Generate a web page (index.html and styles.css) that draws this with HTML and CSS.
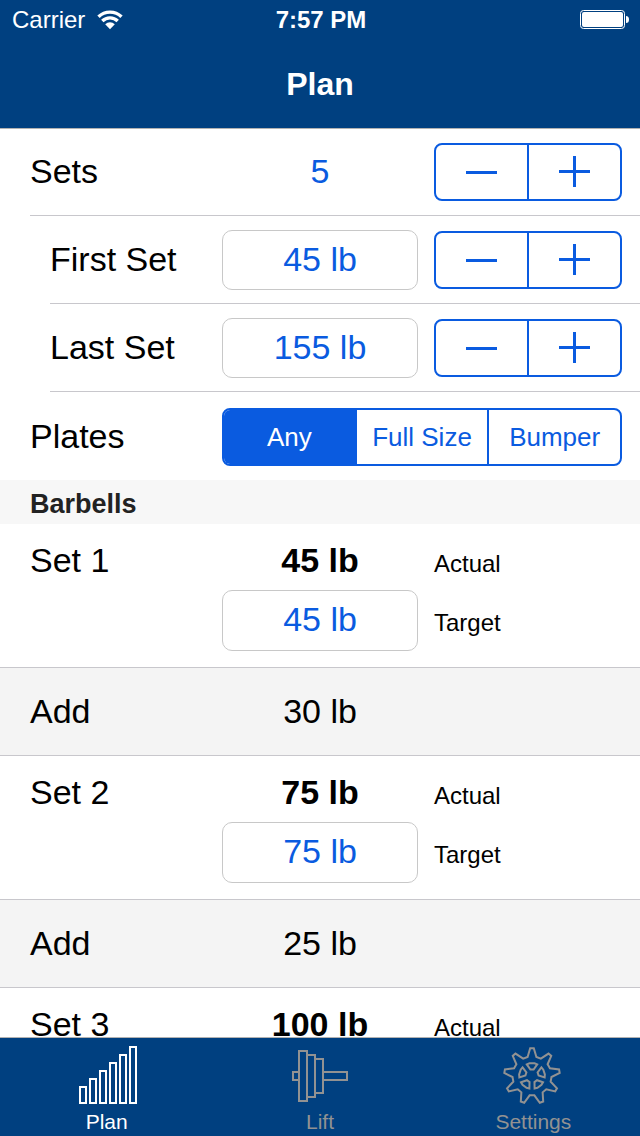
FILE: index.html
```html
<!DOCTYPE html>
<html lang="en">
<head>
    <meta charset="utf-8" />
    <meta name="viewport" content="width=device-width" />
    <title>Plan</title>
    <link rel="stylesheet" href="styles.css">
</head>
<body>
    <header class="top">
        <div class="status">
            <div class="carrier">
                <span>Carrier</span>
                <svg width="26" height="20" viewBox="0 0 26 20" aria-hidden="true">
                    <path d="M1.500 6.800a16.500 16.500 0 0 1 23 0M5.300 11a11 11 0 0 1 15.400 0" fill="none" stroke="#fff" stroke-width="3.400" />
                    <path d="M8.200 14.200a7 7 0 0 1 9.600 0L13 19.200z" fill="#fff" />
                </svg>
            </div>
            <div class="clock">7:57 PM</div>
            <svg class="battery" width="50" height="20" viewBox="0 0 50 20" aria-hidden="true">
                <rect x="0.5" y="0.5" width="44" height="18" rx="3" fill="none" stroke="#fff" />
                <rect x="2" y="2" width="41" height="15" rx="2" fill="#fff" />
                <path d="M46 6q3 0 3 3.500t-3 3.500z" fill="#fff" />
            </svg>
        </div>
        <h1>Plan</h1>
    </header>

    <main>
        <section class="options">
            <div class="row">
                <span class="name">Sets</span>
                <output class="value blue">5</output>
                <div class="stepper">
                    <button type="button" aria-label="Fewer sets"><svg width="32" height="32"><path d="M0 16.500h31" /></svg></button>
                    <button type="button" aria-label="More sets"><svg width="32" height="32"><path d="M0 15.500h31M15.500 0v31" /></svg></button>
                </div>
            </div>
            <div class="row sub">
                <label class="name" for="first">First Set</label>
                <input class="weight" id="first" type="text" value="45 lb" />
                <div class="stepper">
                    <button type="button" aria-label="Lower first set"><svg width="32" height="32"><path d="M0 16.500h31" /></svg></button>
                    <button type="button" aria-label="Raise first set"><svg width="32" height="32"><path d="M0 15.500h31M15.500 0v31" /></svg></button>
                </div>
            </div>
            <div class="row sub">
                <label class="name" for="last">Last Set</label>
                <input class="weight" id="last" type="text" value="155 lb" />
                <div class="stepper">
                    <button type="button" aria-label="Lower last set"><svg width="32" height="32"><path d="M0 16.500h31" /></svg></button>
                    <button type="button" aria-label="Raise last set"><svg width="32" height="32"><path d="M0 15.500h31M15.500 0v31" /></svg></button>
                </div>
            </div>
            <div class="row plates">
                <span class="name" id="plates">Plates</span>
                <div class="segmented" role="radiogroup" aria-labelledby="plates">
                    <label><input type="radio" name="plates" checked />Any</label>
                    <label><input type="radio" name="plates" />Full Size</label>
                    <label><input type="radio" name="plates" />Bumper</label>
                </div>
            </div>
        </section>

        <section>
            <h2>Barbells</h2>
            <div class="set">
                <span class="name">Set 1</span>
                <span class="value actual">45 lb</span>
                <span class="note">Actual</span>
                <input class="weight" id="target1" type="text" value="45 lb" />
                <label class="note" for="target1">Target</label>
            </div>
            <div class="row add">
                <span class="name">Add</span>
                <span class="value">30 lb</span>
            </div>
            <div class="set">
                <span class="name">Set 2</span>
                <span class="value actual">75 lb</span>
                <span class="note">Actual</span>
                <input class="weight" id="target2" type="text" value="75 lb" />
                <label class="note" for="target2">Target</label>
            </div>
            <div class="row add">
                <span class="name">Add</span>
                <span class="value">25 lb</span>
            </div>
            <div class="set">
                <span class="name">Set 3</span>
                <span class="value actual">100 lb</span>
                <span class="note">Actual</span>
            </div>
        </section>
    </main>

    <nav class="tabs">
        <a class="current" href="#plan">
            <svg width="60" height="60" viewBox="0 0 60 60" aria-hidden="true">
                <rect x="3" y="41" width="6" height="16" />
                <rect x="13" y="33" width="6" height="24" />
                <rect x="23" y="25" width="6" height="32" />
                <rect x="33" y="17" width="6" height="40" />
                <rect x="43" y="9" width="6" height="48" />
                <rect x="53" y="1" width="6" height="56" />
            </svg>
            <span>Plan</span>
        </a>
        <a href="#lift">
            <svg width="60" height="60" viewBox="0 0 60 60" aria-hidden="true">
                <rect x="3" y="26" width="6" height="8" />
                <rect x="9" y="5" width="8" height="50" />
                <rect x="17" y="9" width="8" height="42" />
                <rect x="25" y="13" width="8" height="34" />
                <rect x="33" y="26" width="24" height="8" />
            </svg>
            <span>Lift</span>
        </a>
        <a href="#settings">
            <svg width="60" height="60" viewBox="-29 -30 60 60" aria-hidden="true">
                <path d="M-4.400-19L-1.800-27.800H1.800L4.400-19L8.850-17.380L16.500-22.450L19.260-20.130L15.590-11.720L17.950-7.640L27.070-6.610L27.690-3.070L19.490 1.020L18.650 5.690L24.970 12.340L23.170 15.460L14.250 13.310L10.640 16.360L11.200 25.520L7.820 26.740L2.360 19.360H-2.360L-7.820 26.740L-11.200 25.520L-10.640 16.360L-14.250 13.310L-23.170 15.460L-24.970 12.340L-18.650 5.690L-19.490 1.020L-27.690-3.070L-27.070-6.610L-17.950-7.640L-15.590-11.720L-19.260-20.130L-16.500-22.450L-8.850-17.380Z" />
                <path id="hole" d="M-5.200-11.600L-2.500-12.700H2.500L5.200-11.600L1.600-6.400H-1.600Z" />
                <use href="#hole" transform="rotate(72)" />
                <use href="#hole" transform="rotate(144)" />
                <use href="#hole" transform="rotate(216)" />
                <use href="#hole" transform="rotate(288)" />
            </svg>
            <span>Settings</span>
        </a>
    </nav>
</body>
</html>
```
FILE: styles.css
```css
* {
    box-sizing: border-box;
}

body {
    margin: 0;
    height: 100vh;
    display: flex;
    flex-direction: column;
    background: #fff;
    color: #000;
    font: 34px/40px "Liberation Sans", Arial, sans-serif;
}

h1, h2 {
    margin: 0;
    font-weight: bold;
}

button, input {
    font: inherit;
    color: inherit;
}

/* status bar and title */
.top {
    position: relative;
    background: #004080;
    color: #fff;
    box-shadow: 0 1px 0 #b2b2b2;
}

.status {
    display: grid;
    grid-template-columns: 1fr auto 1fr;
    align-items: center;
    height: 40px;
    padding: 0 10px 0 12px;
    font-size: 24px;
}

.carrier {
    display: flex;
    align-items: center;
    gap: 12px;
}

.clock {
    font-weight: bold;
}

.battery {
    justify-self: end;
}

.top h1 {
    padding: 24px 0;
    font-size: 32px;
    text-align: center;
}

main {
    flex: 1;
    min-height: 0;
    overflow-y: auto;
    scrollbar-width: none;
}

/* table rows */
.row, .set {
    display: grid;
    grid-template-columns: 1fr 196px 1fr;
}

.row {
    align-items: center;
    height: 88px;
}

.options .row {
    background: linear-gradient(#c8c7cc, #c8c7cc) 30px 100% / 100% 1px no-repeat;
}

.options .sub {
    background-position: 50px 100%;
}

.options .plates {
    padding-top: 2px;
    background: none;
}

.name {
    padding-left: 30px;
}

.sub .name {
    padding-left: 50px;
}

.value {
    text-align: center;
}

.row .name, .row .value {
    padding-bottom: 2px;
}

.blue {
    color: #0a5be0;
}

.weight {
    width: 100%;
    height: 60px;
    padding: 0 8px 2px;
    border: 1px solid #c8c8c8;
    border-radius: 10px;
    background: #fff;
    color: #0a5be0;
    text-align: center;
}

.stepper, .segmented {
    display: flex;
    height: 58px;
    border: 2px solid #0a5be0;
    border-radius: 8px;
    overflow: hidden;
}

.stepper {
    margin: 0 18px 0 16px;
}

.stepper button {
    flex: 1;
    display: flex;
    align-items: center;
    justify-content: center;
    padding: 0;
    border: 0;
    background: none;
}

.stepper button + button, .segmented label + label {
    border-left: 2px solid #0a5be0;
}

.stepper path {
    stroke: #0a5be0;
    stroke-width: 3;
}

.segmented {
    grid-column: 2 / 4;
    margin-right: 18px;
    color: #0a5be0;
    font-size: 26px;
}

.segmented label {
    flex: 1;
    line-height: 54px;
    text-align: center;
}

.segmented label:has(:checked) {
    background: #0a5be0;
    color: #fff;
}

.segmented input {
    appearance: none;
    width: 0;
    height: 0;
    margin: 0;
}

/* barbells */
h2 {
    padding: 4px 30px 0;
    background: #f7f7f7;
    color: #222;
    font-size: 27px;
}

.set {
    align-items: baseline;
    padding: 16px 0;
    row-gap: 10px;
    border-bottom: 1px solid #c8c7cc;
}

.set .weight {
    grid-column: 2;
    height: 61px;
}

.actual {
    font-weight: bold;
}

.note {
    padding-left: 16px;
    font-size: 24px;
    line-height: 30px;
}

.add {
    background: #f4f4f4;
    border-bottom: 1px solid #c8c7cc;
}

/* tab bar */
.tabs {
    display: flex;
    padding: 8px 0 2px;
    border-top: 1px solid #b2b2b2;
    background: #004080;
}

.tabs a {
    flex: 1;
    display: flex;
    flex-direction: column;
    align-items: center;
    gap: 4px;
    color: #929292;
    font-size: 21px;
    line-height: 24px;
    text-decoration: none;
}

.tabs .current {
    color: #fff;
}

.tabs svg {
    fill: none;
    stroke: currentColor;
    stroke-width: 2;
}
```
